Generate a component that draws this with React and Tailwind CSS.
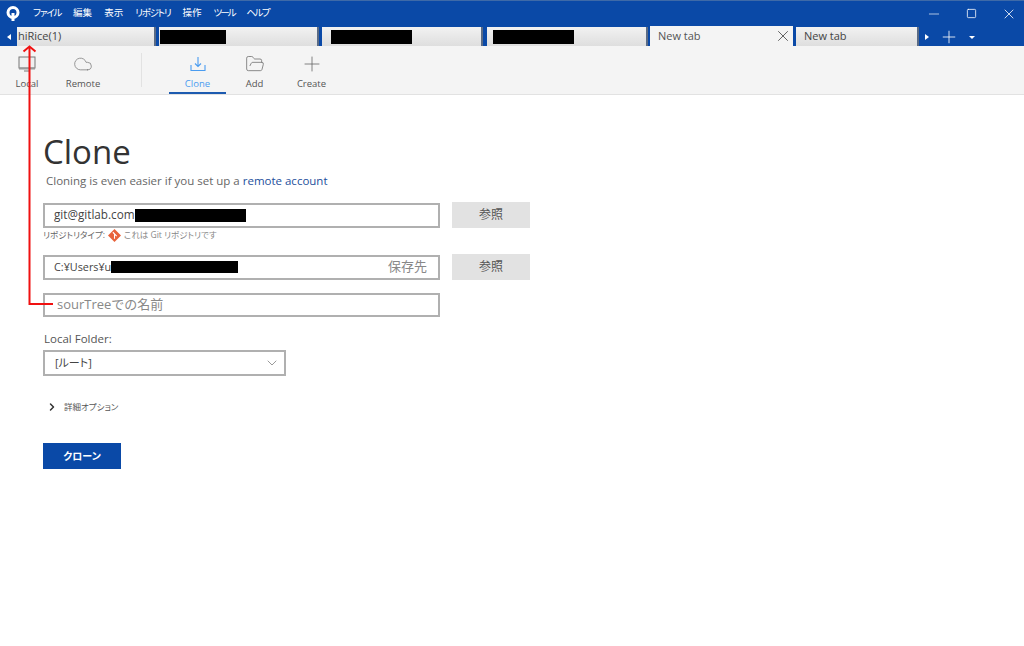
import { X, Plus, Minus, Square, ChevronDown, ChevronRight, Cloud, FolderOpen } from "lucide-react";

const font = { fontFamily: '"Open Sans", "Noto Sans CJK JP", sans-serif' };

const menus = [
  { label: "ファイル", cls: "tracking-[-1.2px]" },
  { label: "編集", cls: "" },
  { label: "表示", cls: "" },
  { label: "リポジトリ", cls: "tracking-[-1.2px]" },
  { label: "操作", cls: "" },
  { label: "ツール", cls: "tracking-[-2px]" },
  { label: "ヘルプ", cls: "tracking-[-1.6px]" },
];

const Redact = ({ className }) => <span className={`block bg-black ${className}`} />;

const Tab = ({ className, children }) => (
  <div className={`h-[19px] flex items-center shrink-0 bg-gradient-to-b from-[#f2f2f2] to-[#dedede] border-r-2 border-[#5a6b85] text-[11px] text-[#444] ${className}`}>
    {children}
  </div>
);

const ToolItem = ({ icon, label, active, className }) => (
  <div className={`flex flex-col items-center h-[48px] pt-[8px] ${active ? "border-b-2 border-[#1d5bb0]" : ""} ${className}`}>
    <div className="h-[20px] flex items-center justify-center">{icon}</div>
    <span className={`text-[9.5px] mt-[3px] leading-[14px] ${active ? "text-[#4a9cf0]" : "text-[#555]"}`}>{label}</span>
  </div>
);

const Field = ({ children, className }) => (
  <div className={`w-[397px] border-2 border-[#b0b0b0] flex items-center bg-white ${className}`}>{children}</div>
);

const Browse = () => (
  <button className="w-[78px] h-[26px] bg-[#e2e2e2] text-[12px] text-[#555] ml-[12px]">参照</button>
);

const App = () => {
  return (
    <div style={font} className="relative w-[1024px] h-[646px] bg-white overflow-hidden">
      {/* title bar */}
      <div className="h-[26px] bg-[#0a49a7] flex items-center border-t border-[#3e6aa8]">
        <svg width="16" height="18" viewBox="0 0 16 18" className="ml-[5px] mr-[12px]">
          <circle cx="8" cy="7.500" r="5" fill="none" stroke="#fff" strokeWidth="3" />
          <path d="M6.500 8h3v8h-3z" fill="#fff" />
        </svg>
        <div className="flex gap-[12px] text-[9.500px] text-white [font-feature-settings:'palt']">
          {menus.map((m) => (
            <span key={m.label} className={m.cls}>{m.label}</span>
          ))}
        </div>
        <div className="ml-auto flex items-center gap-[24px] mr-[7px] text-white">
          <Minus size={16} strokeWidth={1} />
          <Square size={11} strokeWidth={1.7} />
          <X size={16} strokeWidth={1.2} />
        </div>
      </div>

      {/* tab strip */}
      <div className="h-[20px] bg-[#0a49a7] flex items-end">
        <div className="w-[17px] h-[19px] flex items-center justify-center">
          <span className="w-0 h-0 border-y-[3px] border-y-transparent border-r-[4px] border-r-white" />
        </div>
        <Tab className="w-[139px] mr-[3px] pl-[1px]">hiRice(1)</Tab>
        <Tab className="w-[160px] mr-[3px] pl-[1px]"><Redact className="w-[66px] h-[14px]" /></Tab>
        <Tab className="w-[161px] mr-[4px] pl-[9px]"><Redact className="w-[81px] h-[14px]" /></Tab>
        <Tab className="w-[161px] mr-[2px] pl-[6px]"><Redact className="w-[81px] h-[14px]" /></Tab>
        <div className="w-[143px] h-[20px] mr-[3px] bg-[#f4f4f4] flex items-center justify-between pl-[8px] pr-[1px] text-[11px] text-[#555]">
          New tab
          <X size={18} strokeWidth={1.1} className="text-[#444]" />
        </div>
        <Tab className="w-[123px] pl-[8px]">New tab</Tab>
        <div className="flex-1 h-[19px] flex items-center text-white pl-[6px]">
          <span className="w-0 h-0 border-y-[3px] border-y-transparent border-l-[4px] border-l-white" />
          <Plus size={20} strokeWidth={1} className="ml-[10px]" />
          <span className="ml-[10px] mt-[2px] w-0 h-0 border-x-[3.500px] border-x-transparent border-t-[3px] border-t-white" />
        </div>
      </div>

      {/* toolbar */}
      <div className="h-[49px] bg-[#f4f4f4] border-b border-[#e2e2e2] flex items-start">
        <ToolItem
          className="w-[54px]"
          label="Local"
          icon={
            <svg width="18" height="16" viewBox="0 0 18 16" fill="none" stroke="#777">
              <rect x="1" y="1" width="16" height="11" fill="#f0f0f0" />
              <path d="M1 12.500h16" strokeWidth="2" stroke="#999" />
              <path d="M6 15h6" />
            </svg>
          }
        />
        <ToolItem className="w-[58px]" label="Remote" icon={<Cloud size={20} strokeWidth={0.9} color="#777" />} />
        <div className="w-px h-[34px] bg-[#e2e2e2] ml-[29px] mt-[7px]" />
        <ToolItem
          className="w-[57px] ml-[27px]"
          label="Clone"
          active
          icon={
            <svg width="16" height="16" viewBox="0 0 16 16" fill="none" stroke="#4a9cf0" strokeWidth="1.1">
              <path d="M8 1v9M5 7.500L8 10.500 11 7.500" />
              <path d="M1 9v5.500h14V9" />
            </svg>
          }
        />
        <ToolItem className="w-[57px]" label="Add" icon={<FolderOpen size={20} strokeWidth={0.9} color="#666" />} />
        <ToolItem className="w-[57px]" label="Create" icon={<Plus size={24} strokeWidth={0.8} color="#666" />} />
      </div>

      {/* form */}
      <div className="pl-[43px]">
        <h1 className="text-[33px] leading-[46px] text-[#333] mt-[34px]">Clone</h1>
        <p className="text-[11.500px] leading-[16px] text-[#666] ml-[3px] -mt-[2px]">
          Cloning is even easier if you set up a <span className="text-[#1d4f9c]">remote account</span>
        </p>

        <div className="flex items-center mt-[13px]">
          <Field className="h-[25px] pl-[9px] text-[11.700px] text-[#444]">
            git@gitlab.com<Redact className="w-[111px] h-[13px]" />
          </Field>
          <Browse />
        </div>
        <div className="flex items-center text-[8.500px] h-[12px] mt-[1px] text-[#666] [font-feature-settings:'palt']">
          リポジトリタイプ:
          <svg width="13" height="13" viewBox="0 0 12 12" className="mx-[3px]">
            <path d="M6 0l6 6-6 6-6-6z" fill="#e8633c" />
            <path d="M4.500 3L8 6.500M6 5v4" stroke="#fff" strokeWidth="1" />
          </svg>
          <span className="text-[#888]">これは Git リポジトリです</span>
        </div>

        <div className="flex items-center mt-[13px]">
          <Field className="h-[25px] pl-[9px] pr-[11px] text-[10.800px] text-[#444]">
            C:¥Users¥u<Redact className="w-[127px] h-[12px]" />
            <span className="ml-auto text-[13px] text-[#888]">保存先</span>
          </Field>
          <Browse />
        </div>

        <Field className="h-[24px] pl-[12px] mt-[13px] text-[13px] text-[#888]">sourTreeでの名前</Field>

        <div className="text-[11.500px] leading-[16px] text-[#555] ml-px mt-[14px]">Local Folder:</div>
        <div className="w-[243px] h-[26px] mt-[3px] border-2 border-[#b0b0b0] flex items-center justify-between pl-[10px] pr-[4px] text-[11px] text-[#444] [font-feature-settings:'palt']">
          [ルート]
          <ChevronDown size={16} strokeWidth={1} color="#666" />
        </div>

        <div className="flex items-center mt-[24px] h-[14px] text-[8.500px] text-[#555] [font-feature-settings:'palt']">
          <ChevronRight size={12} strokeWidth={3} color="#333" className="ml-[3px] mr-[6px]" />
          詳細オプション
        </div>

        <button className="w-[78px] h-[26px] bg-[#0a49a7] text-white text-[10px] font-bold mt-[29px] [font-feature-settings:'palt']">クローン</button>
      </div>

      {/* red annotation arrow */}
      <svg width="60" height="270" viewBox="0 0 60 270" fill="none" stroke="#f01010" strokeWidth="2" className="absolute left-0 top-[40px]">
        <path d="M29.500 7V264H53" />
        <path d="M23.500 11.500l6-5 6 5" />
      </svg>
    </div>
  );
};

export default App;
